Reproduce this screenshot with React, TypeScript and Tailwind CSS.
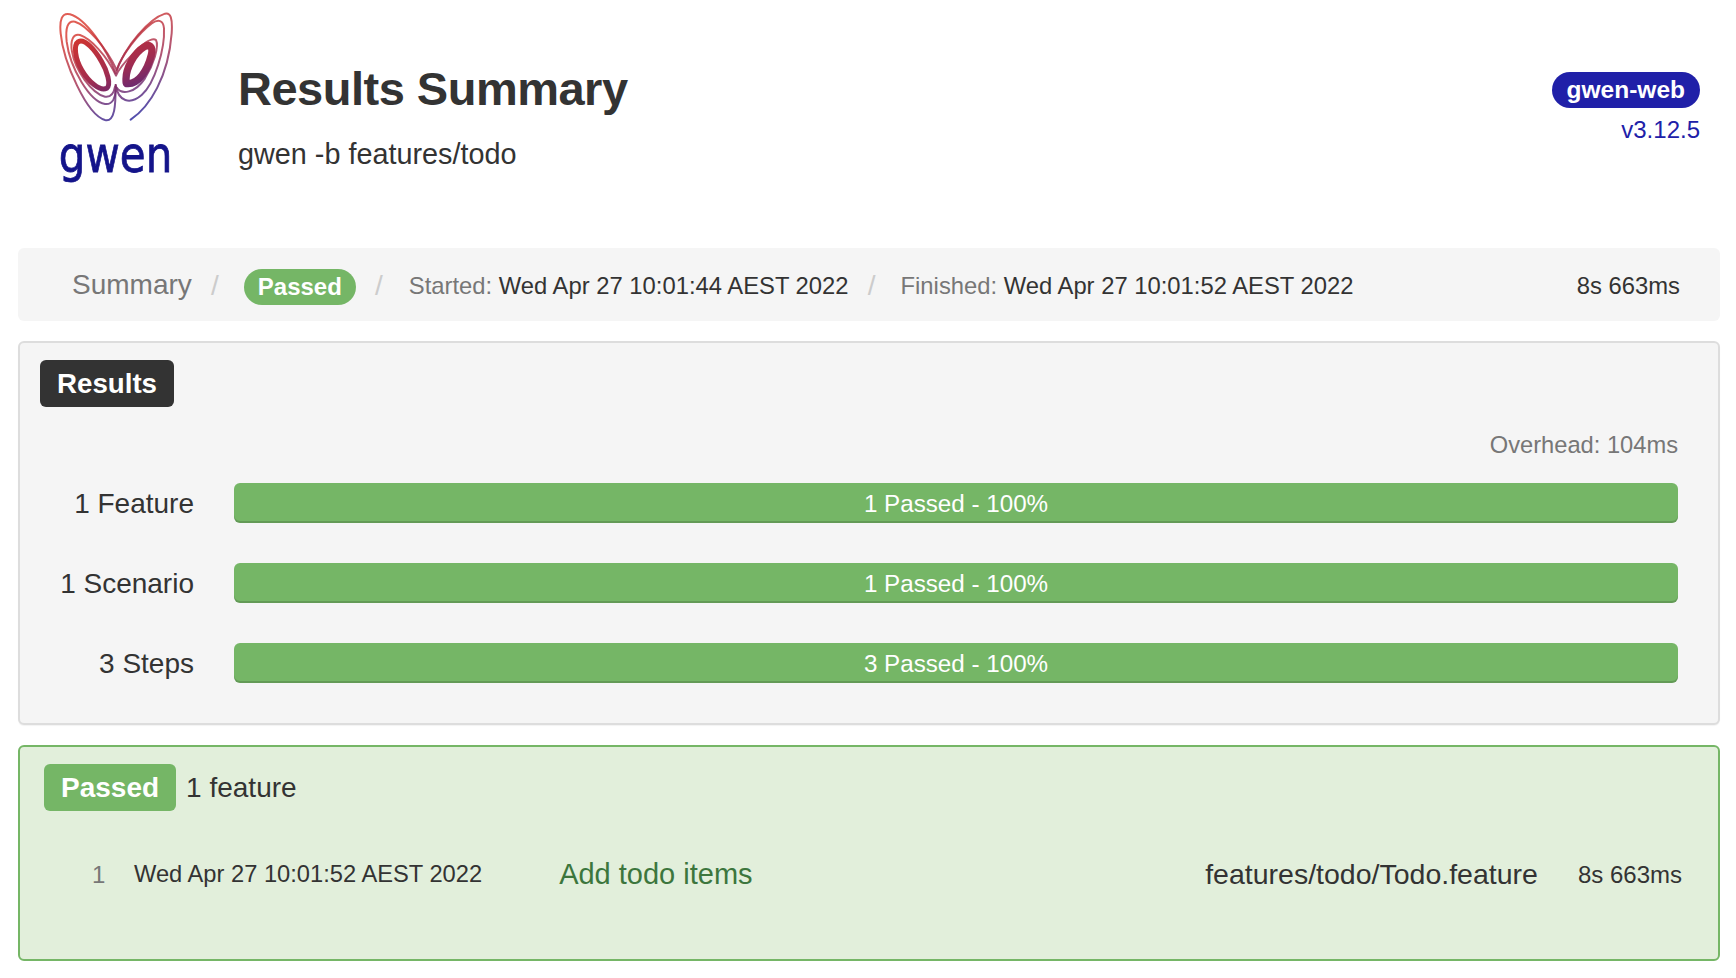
const font = "font-['Liberation_Sans',Arial,sans-serif]";

const Logo = () => (
  <div className="w-[140px] flex flex-col items-center">
    <svg width="140" height="130" viewBox="0 0 420 390" fill="none" className="blur-[0.5px]">
      <defs>
        <linearGradient id="wing" gradientUnits="userSpaceOnUse" x1="120" y1="60" x2="240" y2="350">
          <stop offset="0" stopColor="#d8352a" />
          <stop offset="0.5" stopColor="#a02c50" />
          <stop offset="1" stopColor="#23239c" />
        </linearGradient>
      </defs>
      <g stroke="url(#wing)" strokeLinecap="round" strokeLinejoin="round">
        <path strokeWidth="6" strokeOpacity="0.8" d="M242 344 C300 305 355 215 365 85 C368 40 362 22 345 26 C300 40 225 120 197 205 C170 130 105 40 60 28 C35 22 28 45 32 85 C40 170 110 330 165 345 C195 352 197 300 197 240" />
        <path strokeWidth="6" strokeOpacity="0.8" d="M197 240 C205 290 240 300 275 270 C315 235 345 130 342 70 C340 45 325 42 305 55 C265 85 215 150 200 195 C170 130 110 60 75 50 C52 46 46 70 50 110 C60 190 120 290 165 297 C190 300 196 275 197 255" />
        <path strokeWidth="6" strokeOpacity="0.8" d="M200 248 C215 270 255 265 285 220 C310 180 328 125 318 105 C305 95 275 120 250 145 C225 170 205 195 198 212 C170 150 120 100 90 90 C70 85 60 105 66 140 C75 195 125 265 165 275 C185 278 192 262 195 245" />
        <path strokeWidth="22" d="M232 236 C265 238 292 198 304 150 C310 124 298 116 282 126 C252 144 228 190 228 222 C228 232 228 236 232 236 Z" />
        <path strokeWidth="15" d="M170 250 C150 260 115 230 95 195 C75 160 70 120 85 110 C105 100 135 135 155 170 C170 195 185 240 170 250 Z" />
      </g>
    </svg>
    <span className="mt-[-5px] mr-[8px] inline-block scale-x-[0.84] font-['DejaVu_Sans',sans-serif] text-[50px] leading-[50px] text-[#14148a] [-webkit-text-stroke:0.8px_#14148a] blur-[0.4px]">gwen</span>
  </div>
);

const bars = [
  { label: '1 Feature', value: '1 Passed - 100%' },
  { label: '1 Scenario', value: '1 Passed - 100%' },
  { label: '3 Steps', value: '3 Passed - 100%' },
];

const Slash = () => <span className="text-[#ccc] text-[28px] w-[52px] pr-[6px] text-center">/</span>;

export default function App() {
  return (
    <div className={`${font} min-h-screen bg-white text-[#333] pl-[18px] pr-[16px] overflow-hidden`}>
      {/* Header */}
      <header className="h-[248px] flex items-start">
        <div className="ml-[32px] mt-[5px]"><Logo /></div>
        <div className="ml-[48px] mt-[61px]">
          <h1 className="text-[47px] leading-[56px] font-bold text-[#333] tracking-[-0.5px]">Results Summary</h1>
          <p className="text-[28.8px] leading-[40px] mt-[17px]">gwen -b features/todo</p>
        </div>
        <div className="ml-auto mr-[20px] mt-[72px] flex flex-col items-end">
          <span className="bg-[#2020a8] text-white font-bold text-[24.5px] leading-[36px] h-[36px] px-[15px] rounded-[18px]">gwen-web</span>
          <span className="text-[#2020a8] text-[24px] leading-[28px] mt-[8px]">v3.12.5</span>
        </div>
      </header>

      {/* Breadcrumb */}
      <div className="h-[73px] bg-[#f5f5f5] rounded-[6px] flex items-center pl-[54px] pr-[40px] pt-[2px] text-[23.8px] whitespace-nowrap">
        <span className="text-[#777] text-[28px] mb-[2px]">Summary</span>
        <Slash />
        <span className="bg-[#75b666] text-white font-bold text-[24px] leading-[36px] h-[36px] mt-[3px] px-[14px] rounded-[18px]">Passed</span>
        <Slash />
        <span className="text-[#777] ml-[1px]">Started: <span className="text-[#333]">Wed Apr 27 10:01:44 AEST 2022</span></span>
        <Slash />
        <span className="text-[#777]">Finished: <span className="text-[#333]">Wed Apr 27 10:01:52 AEST 2022</span></span>
        <span className="ml-auto">8s 663ms</span>
      </div>

      {/* Results */}
      <section className="mt-[20px] h-[384px] bg-[#f5f5f5] border-2 border-[#ddd] rounded-[6px] px-[20px] pt-[17px] shadow-[0_1px_1px_rgba(0,0,0,0.05)]">
        <span className="inline-block bg-[#333] text-white font-bold text-[27.7px] leading-[47px] h-[47px] px-[17px] rounded-[6px]">Results</span>
        <div className="text-right text-[#777] text-[23.7px] leading-[30px] mt-[23px] pr-[20px]">Overhead: 104ms</div>
        <div className="mt-[23px] flex flex-col gap-[40px]">
          {bars.map((b) => (
            <div key={b.label} className="flex items-center">
              <div className="w-[154px] h-[40px] text-right text-[28px] leading-[42px]">{b.label}</div>
              <div className="ml-[40px] mr-[20px] flex-1 h-[40px] bg-[#75b666] rounded-[6px] shadow-[inset_0_-2px_0_rgba(0,0,0,0.15)] text-white text-[24.2px] leading-[42px] text-center">{b.value}</div>
            </div>
          ))}
        </div>
      </section>

      {/* Passed features */}
      <section className="mt-[20px] h-[216px] bg-[#e2efdb] border-2 border-[#75b666] rounded-[6px] px-[24px] pt-[17px]">
        <div className="flex items-center">
          <span className="bg-[#75b666] text-white font-bold text-[28px] leading-[47px] h-[47px] px-[17px] rounded-[6px]">Passed</span>
          <span className="ml-[10px] text-[28px]">1 feature</span>
        </div>
        <div className="mt-[42px] flex items-center whitespace-nowrap">
          <span className="text-[#777] text-[24px] w-[89px] pl-[48px]">1</span>
          <span className="ml-[1px] text-[23.7px]">Wed Apr 27 10:01:52 AEST 2022</span>
          <span className="ml-[77px] text-[29px] text-[#3c763d]">Add todo items</span>
          <span className="ml-auto text-[28.5px]">features/todo/Todo.feature</span>
          <span className="ml-[40px] mr-[12px] text-[24px]">8s 663ms</span>
        </div>
      </section>
    </div>
  );
}
